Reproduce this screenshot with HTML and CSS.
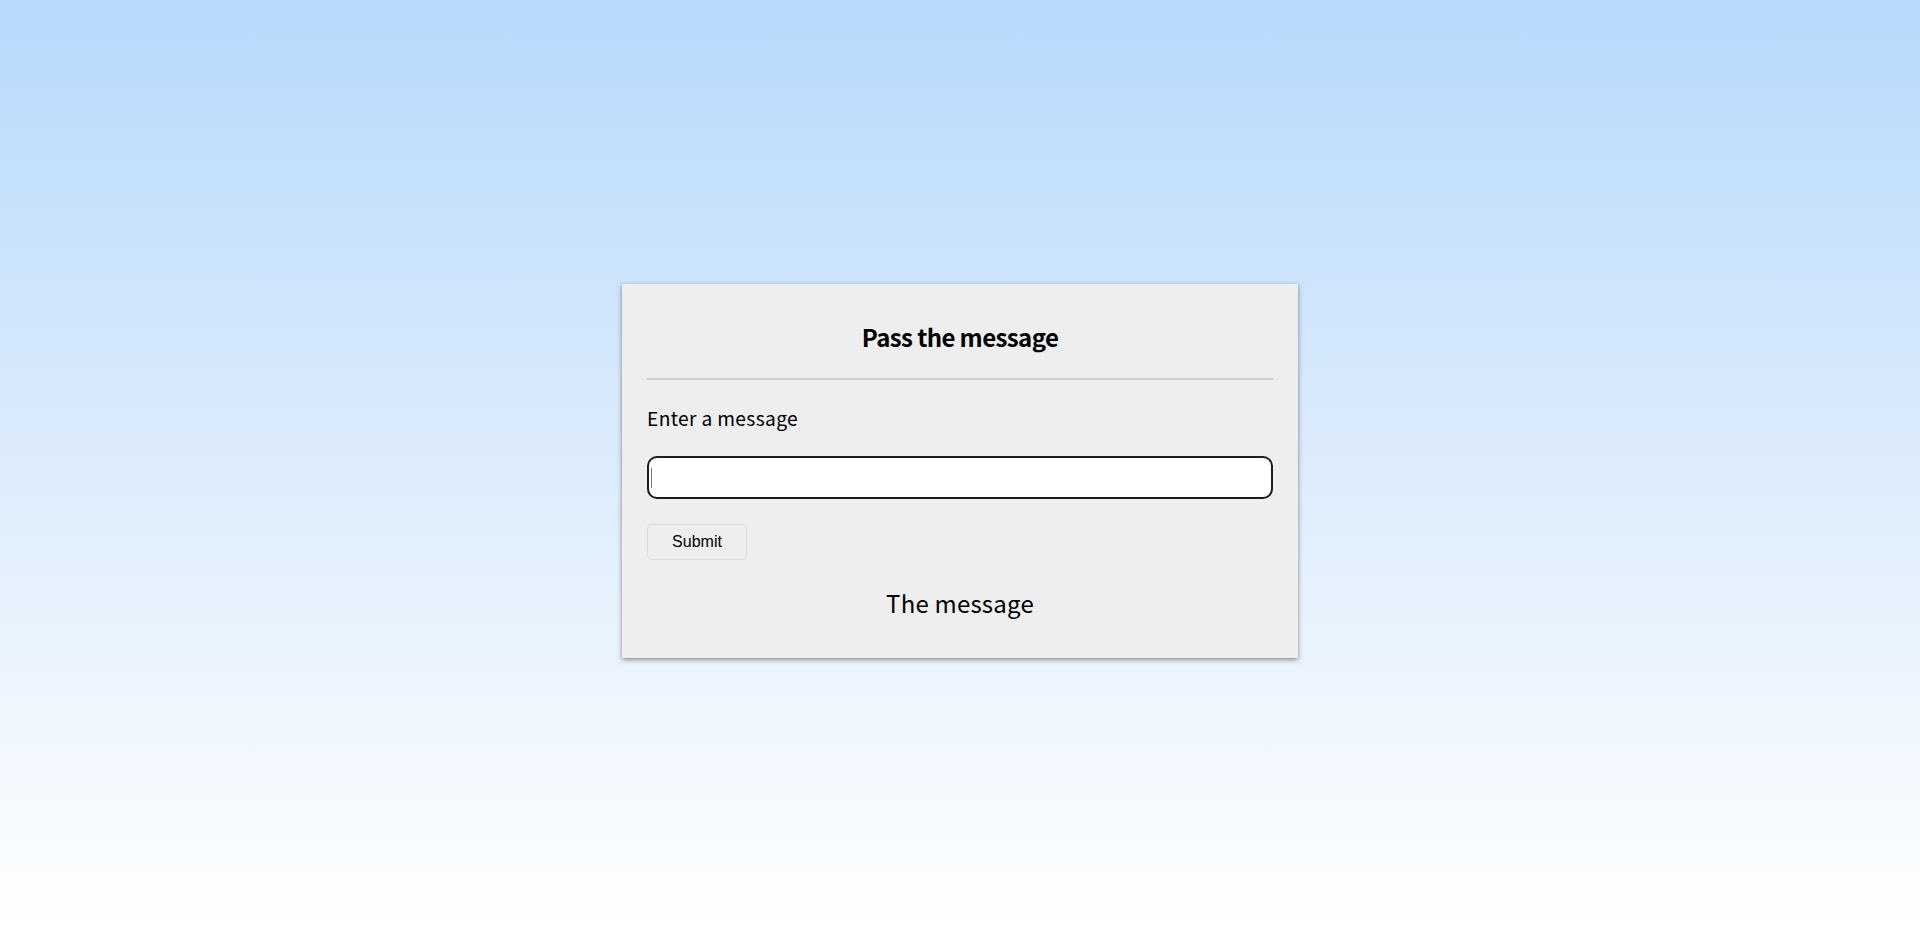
FILE: index.html
```html
<!DOCTYPE html>
<html lang="en">
<head>
<meta charset="utf-8">
<title>Pass the message</title>
<link rel="stylesheet" href="styles.css">
</head>
<body>
<main class="page">
  <section class="card">
    <h1 class="card-title">Pass the message</h1>
    <div class="divider"></div>
    <label class="field-label" for="msg">Enter a message</label>
    <div class="input-wrap">
      <input id="msg" class="msg-input" type="text">
      <span class="caret"></span>
    </div>
    <button class="submit-btn" type="button">Submit</button>
    <p class="result">The message</p>
  </section>
</main>
</body>
</html>
```
FILE: styles.css
```css
html, body {
  margin: 0;
  padding: 0;
  height: 100%;
}

body {
  background: linear-gradient(to bottom, #b6d9fc 0%, #d9eafc 45%, #ffffff 100%);
  font-family: "Noto Sans CJK KR", "Noto Sans", sans-serif;
  color: #000;
}

.page {
  box-sizing: border-box;
  min-height: 100%;
  padding-top: 9px;
  display: flex;
  align-items: center;
  justify-content: center;
}

.card {
  box-sizing: border-box;
  width: 676px;
  background: #eeeeee;
  padding: 36px 25px 39px;
  display: flex;
  flex-direction: column;
  box-shadow: 0 2px 5px rgba(0, 0, 0, 0.38), 0 0 2px rgba(0, 0, 0, 0.12);
}

.card-title {
  margin: 0;
  padding-top: 1px;
  font-size: 24px;
  line-height: 32px;
  font-weight: 700;
  letter-spacing: -0.6px;
  text-align: center;
}

.divider {
  height: 2px;
  background: #d8c8c8;
  margin-top: 25px;
}

.field-label {
  margin-top: 26px;
  font-size: 19.2px;
  line-height: 24px;
  letter-spacing: 0.35px;
}

.input-wrap {
  position: relative;
  margin-top: 26px;
}

.msg-input {
  box-sizing: border-box;
  display: block;
  width: 100%;
  height: 43px;
  border: 2px solid #1c1c1c;
  border-radius: 10px;
  background: #ffffff;
  padding: 0 4px;
  font-size: 16px;
  outline: none;
}

.caret {
  position: absolute;
  left: 4px;
  top: 12px;
  width: 1px;
  height: 20px;
  background: #7a7a7a;
}

.submit-btn {
  align-self: flex-start;
  box-sizing: border-box;
  margin-top: 25px;
  width: 100px;
  height: 36px;
  border: 1px solid #dadada;
  border-radius: 5px;
  background: #eeeeee;
  font-family: "Liberation Sans", Arial, sans-serif;
  font-size: 16px;
  color: #000;
  padding: 0;
}

.result {
  margin: 27px 0 0;
  font-size: 24px;
  line-height: 32px;
  letter-spacing: 0.2px;
  text-align: center;
}
```
